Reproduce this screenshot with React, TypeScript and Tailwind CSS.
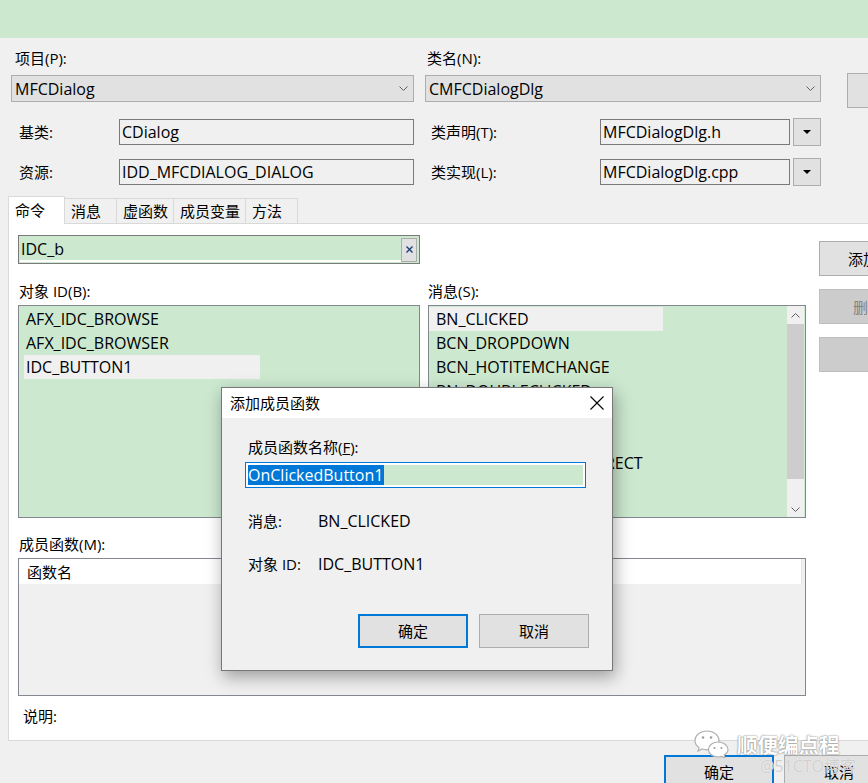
import React from "react";

const objectIds = ["AFX_IDC_BROWSE", "AFX_IDC_BROWSER", "IDC_BUTTON1"];
const messages = [
  "BN_CLICKED",
  "BCN_DROPDOWN",
  "BCN_HOTITEMCHANGE",
  "BN_DOUBLECLICKED",
  "BN_KILLFOCUS",
  "BN_SETFOCUS",
  "NM_GETCUSTOMSPLITRECT",
  "NM_THEMECHANGED",
];
const tabs = [
  { label: "消息", w: "w-[53px]" },
  { label: "虚函数", w: "w-[58px]" },
  { label: "成员变量", w: "w-[73px]" },
  { label: "方法", w: "w-[53px]" },
];

// latin identifiers render a touch wider than the CJK labels around them
function L({ children }: { children: React.ReactNode }) {
  return <span className="text-[16px]">{children}</span>;
}

function Chevron({ up = false }: { up?: boolean }) {
  return (
    <svg width="9" height="5" viewBox="0 0 9 5" className={up ? "rotate-180" : ""}>
      <path d="M0.5 0.5 L4.5 4.5 L8.5 0.5" fill="none" stroke="#606060" strokeWidth="1" />
    </svg>
  );
}

function DropButton() {
  return (
    <div className="shrink-0 w-[28px] h-[28px] ml-[3px] -mt-px border border-[#adadad] bg-[#e1e1e1] flex items-center justify-center">
      <svg width="8" height="4" viewBox="0 0 8 4">
        <path d="M0 0 H8 L4 4 Z" fill="#000" />
      </svg>
    </div>
  );
}

function WeChatLogo() {
  return (
    <svg width="36" height="28" viewBox="0 0 36 28">
      <path
        d="M13 1 C6 1 1 5.5 1 10.5 C1 13.5 2.6 16 5 17.6 L4 21 L8 19 C9.5 19.5 11 19.8 13 19.8 C20 19.8 25 15.5 25 10.5 C25 5.5 20 1 13 1 Z"
        fill="#fff"
        stroke="#b0b0b0"
        strokeWidth="1.2"
      />
      <path
        d="M24 12 C18.5 12 14.5 15.5 14.5 19.5 C14.5 23.5 18.5 27 24 27 C25.3 27 26.5 26.8 27.5 26.4 L31 28 L30.2 25 C32.5 23.6 34 21.7 34 19.5 C34 15.5 29.5 12 24 12 Z"
        fill="#fff"
        stroke="#b0b0b0"
        strokeWidth="1.2"
      />
      <circle cx="9" cy="7.5" r="1.3" fill="#a0a0a0" />
      <circle cx="17" cy="7.5" r="1.3" fill="#a0a0a0" />
      <circle cx="20.5" cy="18" r="1.1" fill="#a0a0a0" />
      <circle cx="27.5" cy="18" r="1.1" fill="#a0a0a0" />
    </svg>
  );
}

export default function App() {
  return (
    <div className="relative w-[868px] h-[783px] overflow-hidden bg-[#f0f0f0] text-[15px] leading-[20px] text-black font-['Open_Sans','Noto_Sans_CJK_SC',sans-serif]">
      <div className="h-[38px] bg-[#cce8cf]" />

      {/* top form */}
      <div className="flex h-[158px]">
        <div className="shrink-0 ml-[11px] w-[403px]">
          <div className="h-[37px] flex items-center pt-[2px] pl-[4px]">项目(P):</div>
          <div className="h-[27px] border border-[#adadad] bg-[#e1e1e1] flex items-center justify-between pl-[3px] pr-[5px]">
            <L>MFCDialog</L>
            <Chevron />
          </div>
          <div className="flex mt-[17px] h-[26px]">
            <div className="w-[108px] pl-[8px] flex items-center">基类:</div>
            <div className="flex-1 border border-[#7a7a7a] bg-[#f0f0f0] flex items-center pl-[2px]">
              <L>CDialog</L>
            </div>
          </div>
          <div className="flex mt-[14px] h-[26px]">
            <div className="w-[108px] pl-[8px] flex items-center">资源:</div>
            <div className="flex-1 border border-[#7a7a7a] bg-[#f0f0f0] flex items-center pl-[2px]">
              <L>IDD_MFCDIALOG_DIALOG</L>
            </div>
          </div>
        </div>

        <div className="shrink-0 ml-[11px] w-[396px]">
          <div className="h-[37px] flex items-center pt-[2px] pl-[2px]">类名(N):</div>
          <div className="h-[27px] border border-[#adadad] bg-[#e1e1e1] flex items-center justify-between pl-[3px] pr-[5px]">
            <L>CMFCDialogDlg</L>
            <Chevron />
          </div>
          <div className="flex mt-[17px] h-[26px]">
            <div className="shrink-0 w-[175px] pl-[6px] flex items-center">类声明(T):</div>
            <div className="shrink-0 w-[190px] border border-[#7a7a7a] bg-[#f0f0f0] flex items-center pl-[2px]">
              <L>MFCDialogDlg.h</L>
            </div>
            <DropButton />
          </div>
          <div className="flex mt-[14px] h-[26px]">
            <div className="shrink-0 w-[175px] pl-[6px] flex items-center">类实现(L):</div>
            <div className="shrink-0 w-[190px] border border-[#7a7a7a] bg-[#f0f0f0] flex items-center pl-[2px]">
              <L>MFCDialogDlg.cpp</L>
            </div>
            <DropButton />
          </div>
        </div>

        <div className="shrink-0 ml-[26px] mt-[35px] w-[40px] h-[35px] border border-[#adadad] bg-[#e1e1e1]" />
      </div>

      {/* tabs */}
      <div className="flex items-end h-[27px] pl-[8px]">
        <div className="relative z-10 -mb-px w-[57px] h-[28px] bg-white border border-b-0 border-[#d9d9d9] pl-[6px] pt-[3px]">命令</div>
        {tabs.map((t) => (
          <div
            key={t.label}
            className={`-ml-px h-[25px] bg-[#f0f0f0] border border-b-0 border-[#d9d9d9] pl-[6px] pt-[2px] ${t.w}`}
          >
            {t.label}
          </div>
        ))}
      </div>

      {/* tab panel */}
      <div className="ml-[8px] w-[900px] h-[518px] bg-white border border-[#d9d9d9] flex">
        <div className="shrink-0 ml-[9px] mt-[11px] w-[788px]">
          <div className="w-[402px] h-[29px] border border-[#7a7a7a] bg-[#cce8cf] flex items-center pl-[1px] pr-[2px]">
            <div className="flex-1 h-[25px] border-b-2 border-white pl-[1px] pt-[2px]">
              <L>IDC_b</L>
            </div>
            <div className="w-[16px] h-[24px] border border-[#adadad] bg-[#e1e1e1] flex items-center justify-center">
              <svg width="7" height="7" viewBox="0 0 7 7">
                <path d="M0.5 0.5 L6.5 6.5 M6.5 0.5 L0.5 6.5" stroke="#1c3f73" strokeWidth="1.4" />
              </svg>
            </div>
          </div>

          <div className="h-[41px] flex items-end pb-[4px]">
            <div className="w-[410px] pl-[1px]">对象 ID(B):</div>
            <div>消息(S):</div>
          </div>

          <div className="flex gap-[8px] h-[213px]">
            <div className="w-[402px] border border-[#828790] bg-[#cce8cf] pt-px">
              {objectIds.map((id, i) => (
                <div
                  key={id}
                  className={`ml-[5px] w-[236px] h-[24px] pl-[2px] flex items-center ${i === 2 ? "bg-[#f0f0f0]" : ""}`}
                >
                  <L>{id}</L>
                </div>
              ))}
            </div>
            <div className="w-[378px] border border-[#828790] bg-[#cce8cf] flex">
              <div className="flex-1 pt-px overflow-hidden">
                {messages.map((m, i) => (
                  <div
                    key={m}
                    className={`w-[234px] h-[24px] pl-[7px] flex items-center whitespace-nowrap ${i === 0 ? "bg-[#f0f0f0]" : ""}`}
                  >
                    <L>{m}</L>
                  </div>
                ))}
              </div>
              <div className="w-[17px] mr-px bg-[#f0f0f0] flex flex-col">
                <div className="h-[18px] flex items-center justify-center">
                  <Chevron up />
                </div>
                <div className="h-[155px] bg-[#cdcdcd]" />
                <div className="flex-1 flex items-end justify-center pb-[5px]">
                  <Chevron />
                </div>
              </div>
            </div>
          </div>

          <div className="h-[40px] flex items-end pb-[4px] pl-[1px]">成员函数(M):</div>

          <div className="h-[138px] border border-[#828790] bg-[#f0f0f0]">
            <div className="w-[783px] h-[25px] bg-white border-r border-[#e5e5e5] pl-[8px] flex items-center">函数名</div>
          </div>

          <div className="mt-[10px] pl-[5px]">说明:</div>
        </div>

        <div className="shrink-0 ml-[13px] mt-[17px] flex flex-col gap-[13px]">
          <div className="w-[75px] h-[35px] border border-[#adadad] bg-[#e1e1e1] flex items-center pl-[28px]">添加</div>
          <div className="w-[75px] h-[35px] border border-[#bfbfbf] bg-[#cccccc] text-[#838383] flex items-center pl-[33px]">删除</div>
          <div className="w-[75px] h-[35px] border border-[#bfbfbf] bg-[#cccccc]" />
        </div>
      </div>

      {/* bottom buttons */}
      <div className="flex ml-[664px] mt-[14px] gap-[10px]">
        <div className="shrink-0 w-[110px] h-[34px] border-2 border-[#0078d7] bg-[#e1e1e1] flex items-center justify-center">确定</div>
        <div className="shrink-0 w-[110px] h-[34px] border border-[#adadad] bg-[#e1e1e1] flex items-center justify-center">取消</div>
      </div>

      {/* watermark */}
      <div className="absolute left-[694px] top-[730px] flex items-start">
        <WeChatLogo />
        <div className="ml-[7px] mt-[2px] text-[20.5px] leading-[26px] font-bold text-white [text-shadow:0_0_1px_#8a8a8a,0_0_2px_#8a8a8a]">
          顺便编点程
        </div>
      </div>
      <div className="absolute left-[760px] top-[756px] text-[16px] leading-[20px] text-[#cfcfcf] [text-shadow:0_0_1px_#ffffff]">
        @51CTO博客
      </div>

      {/* modal dialog */}
      <div className="absolute left-[221px] top-[387px] w-[392px] h-[284px] border border-[#777777] bg-[#f0f0f0] shadow-[2px_6px_16px_rgba(0,0,0,0.35)]">
        <div className="h-[30px] bg-white flex items-center justify-between pl-[8px] pr-[8px]">
          <span>添加成员函数</span>
          <svg width="14" height="14" viewBox="0 0 14 14">
            <path d="M0.5 0.5 L13.5 13.5 M13.5 0.5 L0.5 13.5" stroke="#000" strokeWidth="1.1" />
          </svg>
        </div>
        <div className="pl-[26px]">
          <div className="mt-[19px]">
            成员函数名称(<span className="underline">F</span>):
          </div>
          <div className="mt-[5px] -ml-[3px] w-[341px] h-[26px] border border-[#0078d7] bg-white p-[2px]">
            <div className="h-full bg-[#cce8cf] flex">
              <span className="bg-[#0078d7] text-white h-full flex items-center pr-[1px]">
                <L>OnClickedButton1</L>
              </span>
            </div>
          </div>
          <div className="mt-[23px] flex">
            <div className="w-[70px]">消息:</div>
            <L>BN_CLICKED</L>
          </div>
          <div className="mt-[23px] flex">
            <div className="w-[70px]">对象 ID:</div>
            <L>IDC_BUTTON1</L>
          </div>
          <div className="mt-[40px] flex justify-end pr-[23px] gap-[11px]">
            <div className="w-[110px] h-[34px] border-2 border-[#0078d7] bg-[#e1e1e1] flex items-center justify-center">确定</div>
            <div className="w-[110px] h-[34px] border border-[#adadad] bg-[#e1e1e1] flex items-center justify-center">取消</div>
          </div>
        </div>
      </div>
    </div>
  );
}
